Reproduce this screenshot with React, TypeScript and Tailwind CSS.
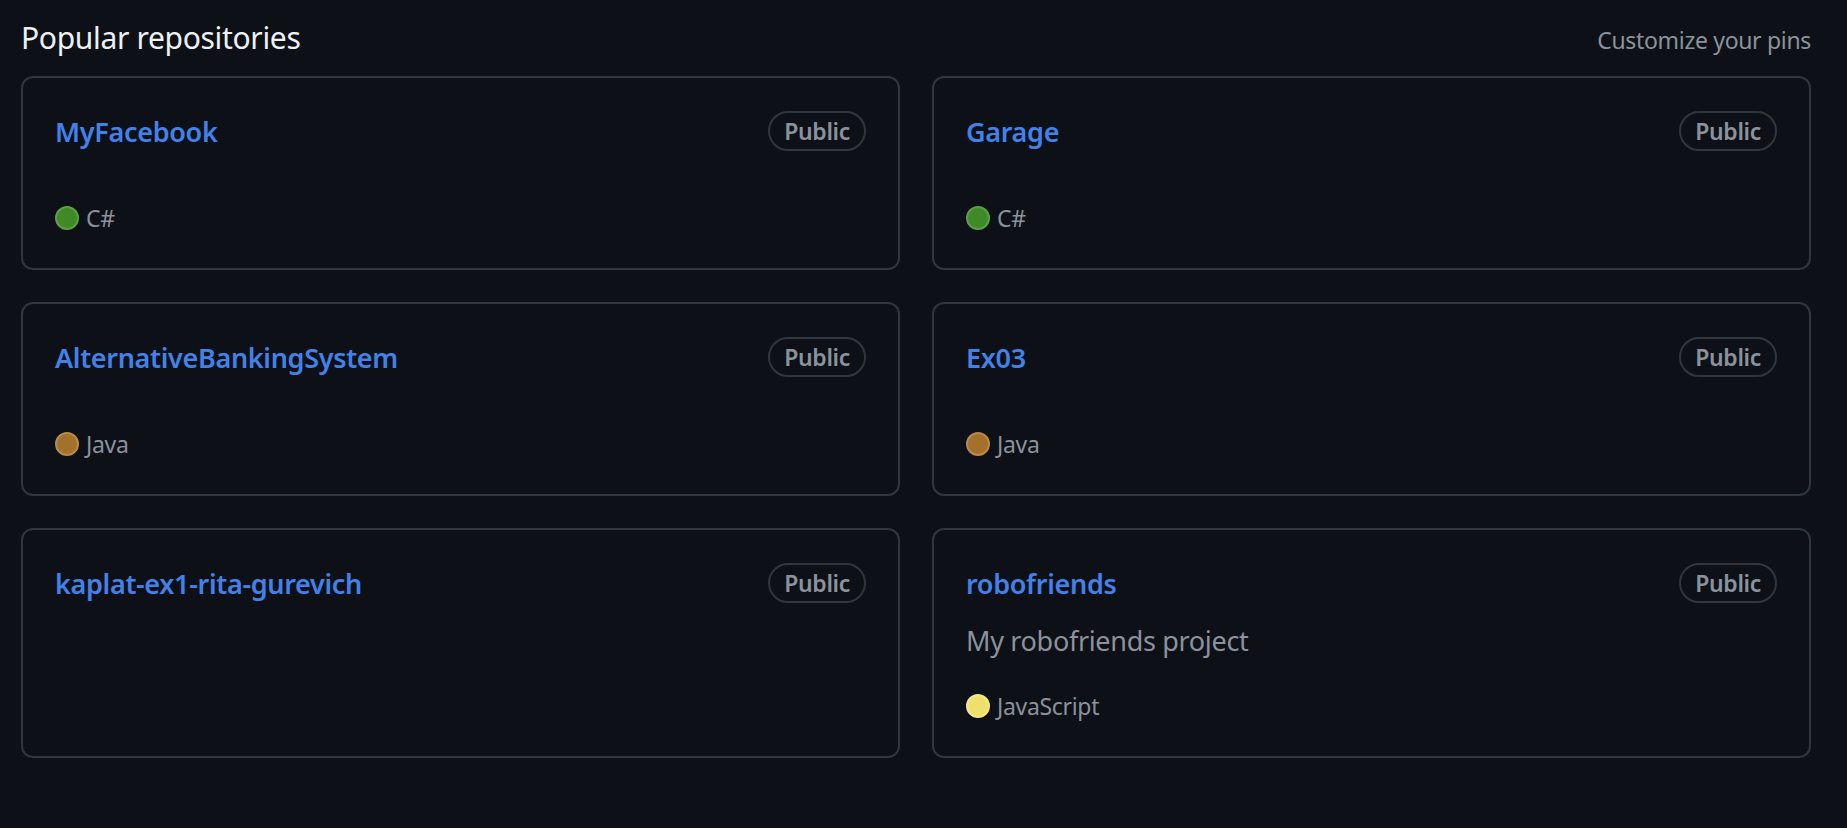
type Repo = {
  name: string;
  description?: string;
  language: string;
  color: string;
  ring: string;
};

const repos: Repo[] = [
  { name: "MyFacebook", language: "C#", color: "bg-[#3f8a27]", ring: "border-[#5c9e49]" },
  { name: "Garage", language: "C#", color: "bg-[#3f8a27]", ring: "border-[#5c9e49]" },
  { name: "AlternativeBankingSystem", language: "Java", color: "bg-[#a4712c]", ring: "border-[#b88a4c]" },
  { name: "Ex03", language: "Java", color: "bg-[#a4712c]", ring: "border-[#b88a4c]" },
  { name: "kaplat-ex1-rita-gurevich", language: "", color: "", ring: "" },
  {
    name: "robofriends",
    description: "My robofriends project",
    language: "JavaScript",
    color: "bg-[#efdf6d]",
    ring: "border-[#f3e68a]",
  },
];

// no Segoe UI here, Noto Sans tightened a bit to get close to its widths
const font = "font-['Noto_Sans','Open_Sans',sans-serif] tracking-[-0.02em]";

const RepoCard = ({ repo }: { repo: Repo }) => (
  <div className="flex min-h-[194px] flex-col rounded-[12px] border-2 border-[#30363d] p-8">
    <div className="flex h-[42px] items-start justify-between">
      <a className="pt-[1px] text-[27px] leading-[42px] font-semibold text-[#4381e8]" href="#">
        {repo.name}
      </a>
      <span className="mt-[1px] rounded-full border-2 border-[#30363d] px-[14px] text-[23px] leading-[36px] font-semibold text-[#8b929b]">
        Public
      </span>
    </div>
    {repo.description && (
      <p className="mt-4 mb-[26px] text-[27px] leading-[42px] text-[#8b929b]">{repo.description}</p>
    )}
    {repo.language && (
      <div className="mt-auto flex h-[36px] items-center gap-[7px] text-[23px] leading-[36px] text-[#8b929b]">
        <span className={`h-[24px] w-[24px] rounded-full border-2 ${repo.color} ${repo.ring}`} />
        <span>{repo.language}</span>
      </div>
    )}
  </div>
);

export default function App() {
  return (
    <div className={`min-h-screen bg-[#0d1117] ${font}`}>
      <div className="ml-[21px] w-[1790px] pt-[14px]">
        <div className="mb-[14px] flex items-baseline justify-between">
          <h2 className="text-[30px] leading-[48px] font-normal text-[#eef1f4]">Popular repositories</h2>
          <a className="text-[23px] leading-[36px] text-[#8b929b]" href="#">
            Customize your pins
          </a>
        </div>
        <div className="grid grid-cols-2 gap-8">
          {repos.map((repo) => (
            <RepoCard key={repo.name} repo={repo} />
          ))}
        </div>
      </div>
    </div>
  );
}
